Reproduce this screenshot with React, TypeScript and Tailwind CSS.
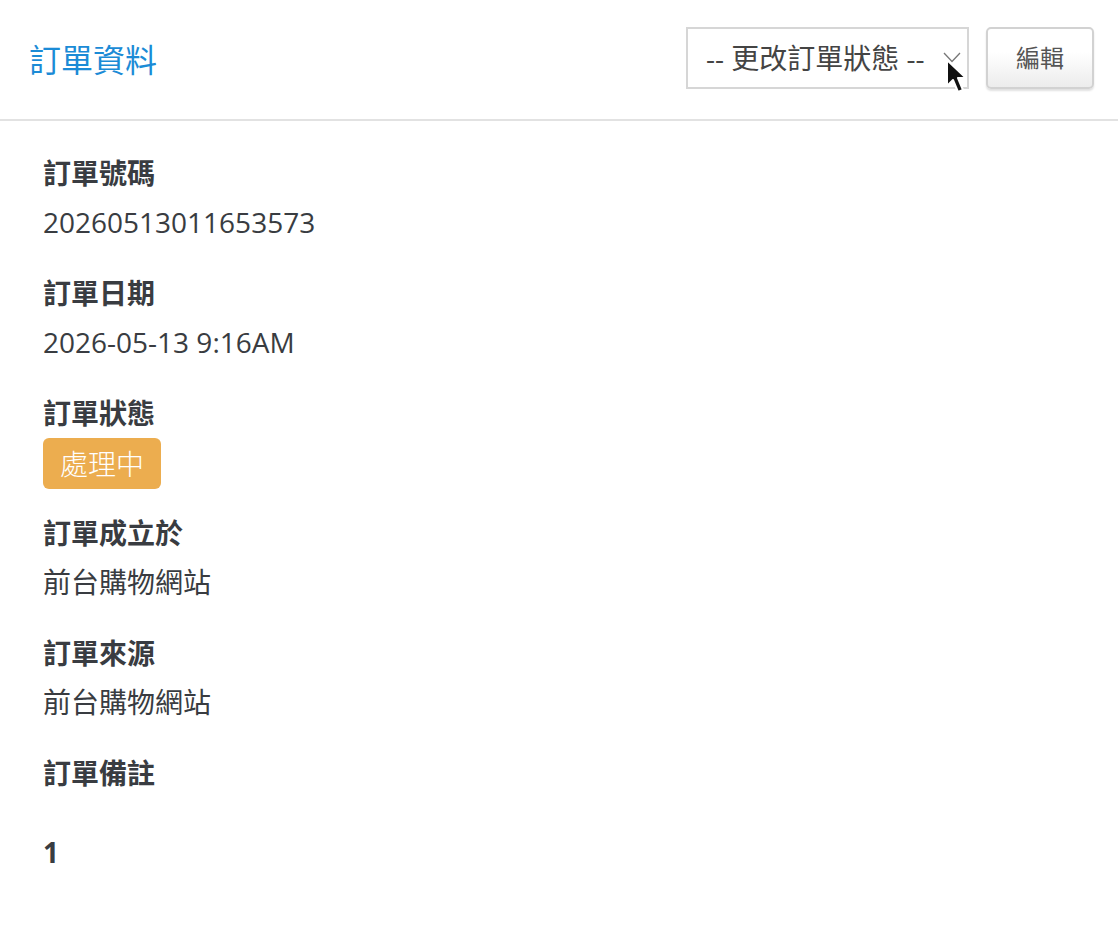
import React from "react";

const font = {
  fontFamily: '"Open Sans", "Noto Sans CJK TC", sans-serif',
};

function Field({
  label,
  children,
  gapAfter = "mb-[29px]",
}: {
  label: string;
  children: React.ReactNode;
  gapAfter?: string;
}) {
  return (
    <div className={gapAfter}>
      <div className="text-[28px] leading-[42px] font-bold text-[#393c41]">{label}</div>
      {children}
    </div>
  );
}

export default function App() {
  return (
    <div
      className="w-[1118px] h-[930px] bg-white text-[#393c41] overflow-hidden"
      style={{ fontFamily: '"Open Sans", "Noto Sans CJK TC", sans-serif' }}
    >
      <div className="h-[121px] border-b-2 border-[#e2e2e2] flex items-center justify-between pl-[29px] pr-[24px] pb-[2px]">
        <div className="text-[32px] text-[#1b8bd6] leading-none mt-[2px]">訂單資料</div>
        <div className="flex items-center gap-[17px] mt-[-2px]">
          <div className="relative w-[283px] h-[62px] border-2 border-[#d6d6d6] bg-white flex items-center pl-[18px]">
            <span className="text-[28px] text-[#444] leading-none" style={font}>
              -- 更改訂單狀態 --
            </span>
            <svg
              className="absolute left-[255px] top-[23px]"
              width="18"
              height="11"
              viewBox="0 0 18 11"
            >
              <path d="M1 1 L9 9.5 L17 1" fill="none" stroke="#777" strokeWidth="1.3" />
            </svg>
            <svg
              className="absolute left-[257px] top-[29px]"
              width="24"
              height="38"
              viewBox="0 0 24 38"
            >
              <path
                d="M2 2 L2 28 L8 22 L13 34 L18 32 L13 20 L21 20 Z"
                fill="#111"
                stroke="#fff"
                strokeWidth="2"
                strokeLinejoin="round"
              />
            </svg>
          </div>
          <div className="w-[108px] h-[62px] rounded-[5px] border-2 border-[#d2d2d2] bg-gradient-to-b from-[#ffffff] from-40% to-[#ececec] shadow-[0_2px_2px_rgba(0,0,0,0.12)] flex items-center justify-center">
            <span className="text-[24px] text-[#555] leading-none">編輯</span>
          </div>
        </div>
      </div>

      <div className="pl-[43px] pt-[31px]">
        <Field label="訂單號碼">
          <div className="text-[28px] leading-[42px] mt-[7px]">20260513011653573</div>
        </Field>
        <Field label="訂單日期">
          <div className="text-[28px] leading-[42px] mt-[7px]">2026-05-13 9:16AM</div>
        </Field>
        <Field label="訂單狀態" gapAfter="mb-[23px]">
          <div className="mt-[4px] inline-flex items-center justify-center h-[51px] w-[118px] rounded-[6px] bg-[#ecad4f] text-white text-[28px] font-light leading-none">
            處理中
          </div>
        </Field>
        <Field label="訂單成立於">
          <div className="text-[28px] leading-[42px] mt-[7px]">前台購物網站</div>
        </Field>
        <Field label="訂單來源">
          <div className="text-[28px] leading-[42px] mt-[7px]">前台購物網站</div>
        </Field>
        <Field label="訂單備註" gapAfter="mb-0">
          <div className="text-[28px] leading-[42px] mt-[37px] font-bold">1</div>
        </Field>
      </div>
    </div>
  );
}
